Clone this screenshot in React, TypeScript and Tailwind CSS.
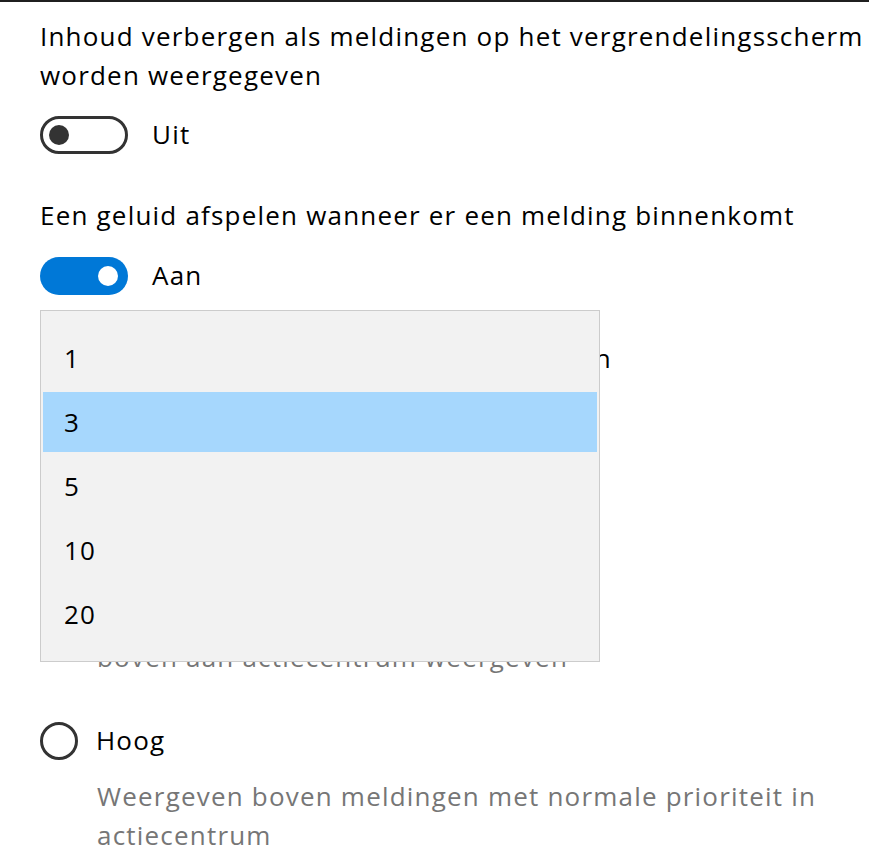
import React from "react";

function ToggleOff() {
  return (
    <div className="flex h-[38px] w-[88px] items-center rounded-full border-[3px] border-[#333333] pl-[6px]">
      <div className="h-[20px] w-[20px] rounded-full bg-[#333333]" />
    </div>
  );
}

function ToggleOn() {
  return (
    <div className="flex h-[38px] w-[88px] items-center justify-end rounded-full bg-[#0078d7] pr-[10px]">
      <div className="h-[20px] w-[20px] rounded-full bg-white" />
    </div>
  );
}

function Radio() {
  return <div className="h-[38px] w-[38px] shrink-0 rounded-full border-[3px] border-[#333333]" />;
}

export default function App() {
  const items = ["1", "3", "5", "10", "20"];
  return (
    <div
      className="relative h-[862px] w-[869px] overflow-hidden bg-white text-[26px] leading-[39px] tracking-[1.2px] text-black"
      style={{ fontFamily: '"Open Sans", "Noto Sans", Arial, sans-serif' }}
    >
      <div className="h-[2px] bg-[#1f1f1f]" />
      <div className="pl-[40px] pt-[15px]">
        <p className="whitespace-nowrap">
          Inhoud verbergen als meldingen op het vergrendelingsscherm
          <br />
          worden weergegeven
        </p>
        <div className="mt-[20px] flex items-center gap-[24px]">
          <ToggleOff />
          <span>Uit</span>
        </div>
        <p className="mt-[42px] whitespace-nowrap">Een geluid afspelen wanneer er een melding binnenkomt</p>
        <div className="mt-[21px] flex items-center gap-[24px]">
          <ToggleOn />
          <span>Aan</span>
        </div>
        <p className="mt-[44px] w-[572px] whitespace-nowrap text-right">Aantal meldingen in actiecentrum tonen</p>
        <div className="mt-[14px] h-[52px] w-[240px] border-2 border-[#999999]" />
        <div className="mt-[100px] flex items-center gap-[18px]">
          <Radio />
        </div>
        <p className="mt-[56px] whitespace-nowrap pl-[57px] text-[#767676]">boven aan actiecentrum weergeven</p>
        <div className="mt-[44px] flex items-center gap-[18px]">
          <Radio />
          <span>Hoog</span>
        </div>
        <p className="mt-[17px] whitespace-nowrap pl-[57px] text-[#767676]">
          Weergeven boven meldingen met normale prioriteit in
          <br />
          actiecentrum
        </p>
      </div>

      <div className="absolute left-[40px] top-[310px] h-[352px] w-[560px] border border-[#cccccc] bg-[#f2f2f2] pt-[14px]">
        {items.map((it) => (
          <div key={it} className="h-[64px] px-[2px] pt-[3px] pb-[1px]">
            <div className={"flex h-full items-center pl-[21px] " + (it === "3" ? "bg-[#a6d7fd]" : "")}>{it}</div>
          </div>
        ))}
      </div>
    </div>
  );
}
